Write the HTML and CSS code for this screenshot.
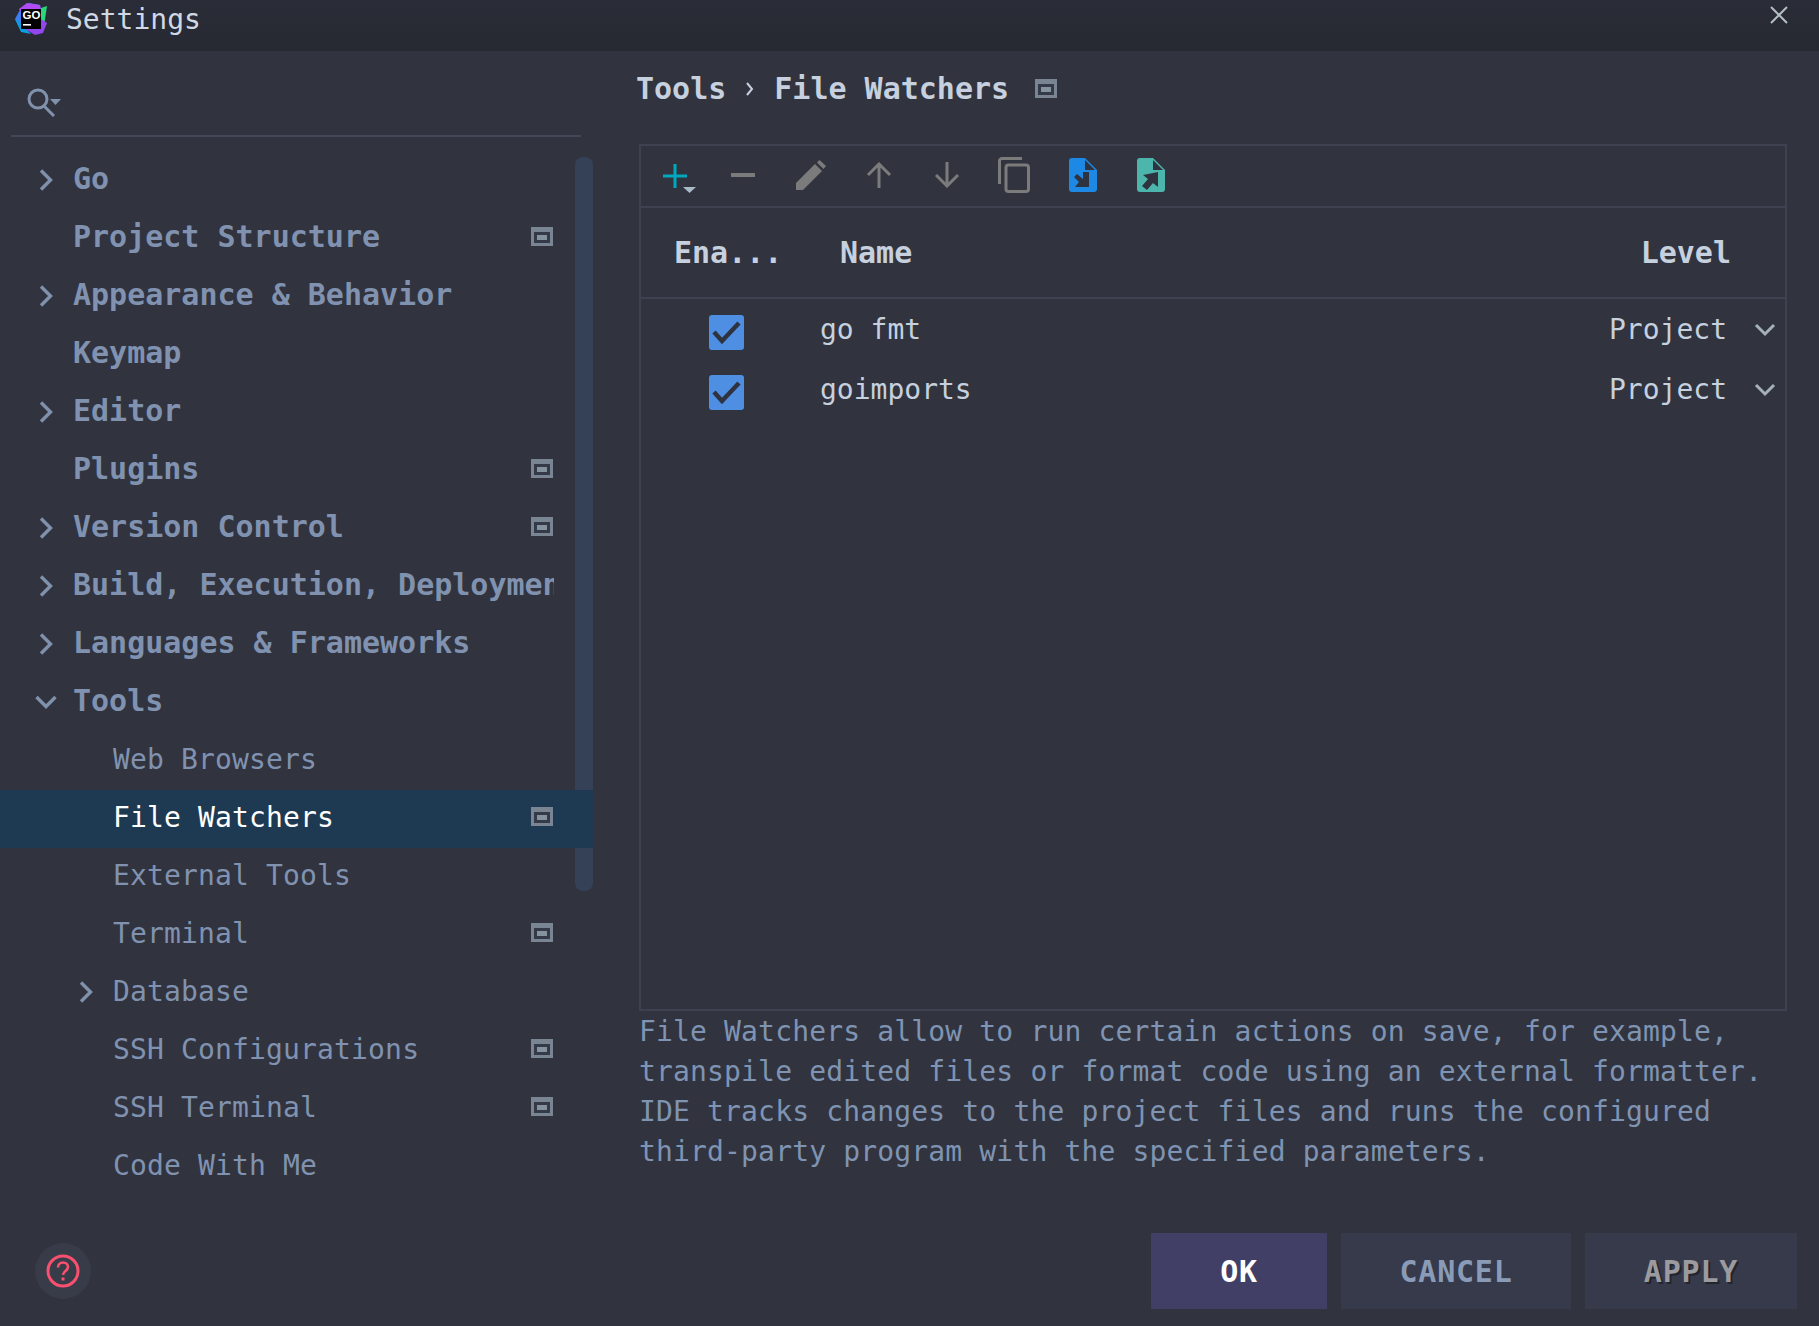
FILE: index.html
```html
<!DOCTYPE html>
<html lang="en">
<head>
    <meta charset="UTF-8">
    <title>Settings</title>
    <link rel="stylesheet" href="styles.css">
</head>
<body>
    <svg class="sprites" width="0" height="0">
        <symbol id="chev" viewBox="0 0 14 22"><path d="M2 1.500l9.500 9.500-9.500 9.500" fill="none" stroke="#8091ab" stroke-width="3.400"/></symbol>
        <symbol id="chev-open" viewBox="0 0 22 14"><path d="M1.500 2l9.500 9.500 9.500-9.500" fill="none" stroke="#8091ab" stroke-width="3.400"/></symbol>
        <symbol id="mod" viewBox="0 0 22 19">
            <rect width="22" height="19" fill="#7a8593"/>
            <rect x="3" y="5" width="16" height="11" fill="#343a48"/>
            <rect x="6" y="8" width="10" height="5" fill="#8593a1"/>
        </symbol>
        <symbol id="check" viewBox="0 0 35 35">
            <rect width="35" height="35" rx="3" fill="#4f8fe3"/>
            <path d="M5 17l8 9L30 8" fill="none" stroke="#2f3340" stroke-width="4.500"/>
        </symbol>
        <symbol id="drop" viewBox="0 0 22 14"><path d="M2 2l9 9 9-9" fill="none" stroke="#a6b0ba" stroke-width="3"/></symbol>
    </svg>

    <div class="window">
        <header class="titlebar">
            <svg class="logo" width="32" height="32" viewBox="0 0 32 32">
                <path d="M0 16L6 5 14 0 25 2 26 8 10 26 5 26z" fill="#3d7df0"/>
                <path d="M4 6L12 0 25 2 27 12 8 12z" fill="#b14cf5"/>
                <path d="M0 16l6 13 10 2-10-11z" fill="#0a9fe0"/>
                <path d="M26 5l6-2-3 20-7-4z" fill="#27d67d"/>
                <path d="M26 16l6 4-4 10-8 2-10-6z" fill="#9146ee"/>
                <rect x="6" y="6" width="20" height="20" fill="#000"/>
                <text x="7.500" y="16" class="logo-text">GO</text>
                <rect x="8" y="21" width="8" height="1.600" fill="#fff"/>
            </svg>
            <span class="title">Settings</span>
            <svg class="close" width="18" height="18" viewBox="0 0 18 18"><path d="M1 1l16 16M17 1L1 17" stroke="#b4bcc4" stroke-width="2"/></svg>
        </header>

        <div class="main">
            <aside class="sidebar">
                <div class="search">
                    <svg width="34" height="29" viewBox="0 0 34 29">
                        <circle cx="11" cy="11" r="9" fill="none" stroke="#8091ab" stroke-width="3"/>
                        <path d="M17 18l10 10" stroke="#8091ab" stroke-width="3"/>
                        <path d="M23 11h11l-5.500 6z" fill="#8091ab"/>
                    </svg>
                </div>
                <div class="scrollbar"></div>
                <ul class="tree">
                    <li class="row top"><svg class="arrow"><use href="#chev"/></svg><span class="label">Go</span></li>
                    <li class="row top"><span class="label">Project Structure</span><svg class="mod"><use href="#mod"/></svg></li>
                    <li class="row top"><svg class="arrow"><use href="#chev"/></svg><span class="label">Appearance &amp; Behavior</span></li>
                    <li class="row top"><span class="label">Keymap</span></li>
                    <li class="row top"><svg class="arrow"><use href="#chev"/></svg><span class="label">Editor</span></li>
                    <li class="row top"><span class="label">Plugins</span><svg class="mod"><use href="#mod"/></svg></li>
                    <li class="row top"><svg class="arrow"><use href="#chev"/></svg><span class="label">Version Control</span><svg class="mod"><use href="#mod"/></svg></li>
                    <li class="row top"><svg class="arrow"><use href="#chev"/></svg><span class="label">Build, Execution, Deployment</span></li>
                    <li class="row top"><svg class="arrow"><use href="#chev"/></svg><span class="label">Languages &amp; Frameworks</span></li>
                    <li class="row top"><svg class="arrow open"><use href="#chev-open"/></svg><span class="label">Tools</span></li>
                    <li class="row sub"><span class="label">Web Browsers</span></li>
                    <li class="row sub selected"><span class="label">File Watchers</span><svg class="mod"><use href="#mod"/></svg></li>
                    <li class="row sub"><span class="label">External Tools</span></li>
                    <li class="row sub"><span class="label">Terminal</span><svg class="mod"><use href="#mod"/></svg></li>
                    <li class="row sub"><svg class="arrow"><use href="#chev"/></svg><span class="label">Database</span></li>
                    <li class="row sub"><span class="label">SSH Configurations</span><svg class="mod"><use href="#mod"/></svg></li>
                    <li class="row sub"><span class="label">SSH Terminal</span><svg class="mod"><use href="#mod"/></svg></li>
                    <li class="row sub"><span class="label">Code With Me</span></li>
                </ul>
                <div class="help">
                    <svg width="34" height="34" viewBox="0 0 34 34">
                        <circle cx="17" cy="17" r="15" fill="none" stroke="#f9506f" stroke-width="3"/>
                        <path d="M12 13.500c0-3 2.200-5 5-5s5 2 5 4.600c0 3.900-5 3.900-5 8" fill="none" stroke="#f9506f" stroke-width="2.600"/>
                        <rect x="15.500" y="23.500" width="3" height="3" fill="#f9506f"/>
                    </svg>
                </div>
            </aside>

            <section class="content">
                <div class="crumbs">
                    <span>Tools</span>
                    <svg width="8" height="14" viewBox="0 0 8 14"><path d="M1 1l5 6-5 6" fill="none" stroke="#c6d0de" stroke-width="2"/></svg>
                    <span>File Watchers</span>
                    <svg class="mod crumb-mod"><use href="#mod"/></svg>
                </div>

                <div class="panel">
                    <div class="toolbar">
                        <svg class="tool" width="34" height="32" viewBox="0 0 34 32">
                            <path d="M12 2v24M0 14h24" stroke="#00a8bf" stroke-width="3"/>
                            <path d="M20 25h13l-6.500 6z" fill="#a9b9c6"/>
                        </svg>
                        <svg class="tool" width="24" height="4" viewBox="0 0 24 4"><path d="M0 2h24" stroke="#7b7b7b" stroke-width="4"/></svg>
                        <svg class="tool" width="30" height="30" viewBox="0 0 30 30">
                            <path d="M0 30v-7L19 4l7 7L7 30z" fill="#7b7b7b"/>
                            <path d="M21 2.500l2.500-2.500 6.500 6-2.500 3z" fill="#7b7b7b"/>
                        </svg>
                        <svg class="tool" width="26" height="26" viewBox="0 0 26 26"><path d="M13 26V3M2 13L13 2l11 11" fill="none" stroke="#7b7b7b" stroke-width="3"/></svg>
                        <svg class="tool" width="26" height="26" viewBox="0 0 26 26"><path d="M13 0v23M2 13l11 11 11-11" fill="none" stroke="#7b7b7b" stroke-width="3"/></svg>
                        <svg class="tool" width="32" height="36" viewBox="0 0 32 36">
                            <path d="M1.500 27V4a2.500 2.500 0 0 1 2.500-2.500h20" fill="none" stroke="#7b7b7b" stroke-width="3"/>
                            <rect x="8" y="8" width="22.500" height="26.500" rx="2.500" fill="none" stroke="#7b7b7b" stroke-width="3"/>
                        </svg>
                        <svg class="tool" width="28" height="34" viewBox="0 0 28 34">
                            <path d="M3 0H16L28 12V31a3 3 0 0 1-3 3H3a3 3 0 0 1-3-3V3a3 3 0 0 1 3-3z" fill="#1e88e5"/>
                            <path d="M16 2l10 10H16z" fill="#2f3340"/>
                            <path d="M20 14v15H6l4-5-5-5 3-3 6 5 0-7z" fill="#2f3340"/>
                        </svg>
                        <svg class="tool" width="28" height="34" viewBox="0 0 28 34">
                            <path d="M3 0H16L28 12V31a3 3 0 0 1-3 3H3a3 3 0 0 1-3-3V3a3 3 0 0 1 3-3z" fill="#4db6ac"/>
                            <path d="M16 2l10 10H16z" fill="#2f3340"/>
                            <path d="M21 14v15l-5-4-6 7-5-4 6-7-5-4z" fill="#2f3340"/>
                        </svg>
                    </div>
                    <div class="thead">
                        <span class="col-enabled">Ena...</span>
                        <span class="col-name">Name</span>
                        <span class="col-level">Level</span>
                    </div>
                    <div class="watcher">
                        <svg class="checkbox"><use href="#check"/></svg>
                        <span class="watcher-name">go fmt</span>
                        <span class="watcher-level">Project</span>
                        <svg class="drop"><use href="#drop"/></svg>
                    </div>
                    <div class="watcher">
                        <svg class="checkbox"><use href="#check"/></svg>
                        <span class="watcher-name">goimports</span>
                        <span class="watcher-level">Project</span>
                        <svg class="drop"><use href="#drop"/></svg>
                    </div>
                </div>

                <p class="desc">File Watchers allow to run certain actions on save, for example,<br>transpile edited files or format code using an external formatter.<br>IDE tracks changes to the project files and runs the configured<br>third-party program with the specified parameters.</p>

                <div class="buttons">
                    <button class="btn ok">OK</button>
                    <button class="btn cancel">CANCEL</button>
                    <button class="btn apply">APPLY</button>
                </div>
            </section>
        </div>
    </div>
</body>
</html>
```

FILE: styles.css
```css
* {
    box-sizing: border-box;
}

body {
    margin: 0;
    background-color: #31343f;
    font-family: "DejaVu Sans Mono", "Liberation Mono", monospace;
    overflow: hidden;
}

.sprites {
    position: absolute;
}

.window {
    width: 1819px;
    height: 1326px;
    display: flex;
    flex-direction: column;
}

.titlebar {
    height: 51px;
    flex: none;
    display: flex;
    align-items: flex-start;
    background: linear-gradient(to bottom, #2a2d37, #262932);
    color: #d0d8e4;
    position: relative;
}

.logo {
    margin: 3px 0 0 15px;
}

.logo-text {
    font-family: "Liberation Sans", sans-serif;
    font-weight: bold;
    font-size: 11.500px;
    fill: #fff;
}

.title {
    margin-left: 19px;
    font-size: 28px;
    line-height: 40px;
}

.close {
    position: absolute;
    right: 31px;
    top: 6px;
}

.main {
    flex: 1;
    display: flex;
    min-height: 0;
}

.sidebar {
    width: 593px;
    flex: none;
    position: relative;
}

.search {
    height: 86px;
    margin: 0 12px 0 11px;
    padding: 37px 0 0 16px;
    border-bottom: 2px solid #444757;
}

.scrollbar {
    position: absolute;
    left: 575px;
    top: 106px;
    width: 18px;
    height: 734px;
    background-color: #344156;
    border-radius: 8px;
}

.tree {
    list-style-type: none;
    margin: 0;
    padding: 15px 0 0;
    position: relative;
}

.row {
    height: 58px;
    padding-bottom: 4px;
    display: flex;
    align-items: center;
    color: #8092b0;
    position: relative;
}

.row.top {
    padding-left: 73px;
    padding-bottom: 6px;
    font-size: 30px;
    font-weight: bold;
}

.row.sub {
    padding-left: 113px;
    font-size: 28px;
    letter-spacing: 0.15px;
}

.row.selected {
    background-color: #1e3a52;
    color: #fff;
}

.label {
    max-width: 481px;
    overflow: hidden;
    white-space: nowrap;
}

.arrow {
    position: absolute;
    width: 14px;
    height: 22px;
    top: 17px;
    left: 39px;
}

.arrow.open {
    width: 22px;
    height: 14px;
    top: 21px;
    left: 35px;
}

.sub .arrow {
    left: 79px;
}

.mod {
    width: 22px;
    height: 19px;
    position: absolute;
    left: 531px;
    top: 17px;
}

.help {
    position: absolute;
    left: 35px;
    top: 1192px;
    width: 56px;
    height: 56px;
    border-radius: 50%;
    background-color: #383b48;
    display: flex;
    align-items: center;
    justify-content: center;
}

.content {
    flex: 1;
    min-width: 0;
    padding: 0 22px 0 46px;
    display: flex;
    flex-direction: column;
}

.crumbs {
    height: 93px;
    flex: none;
    margin-left: -3px;
    padding-bottom: 18px;
    display: flex;
    align-items: center;
    gap: 20px;
    font-size: 30px;
    font-weight: bold;
    color: #c6d0de;
}

.crumb-mod {
    position: static;
    margin-left: 6px;
}

.panel {
    height: 867px;
    flex: none;
    margin-right: 10px;
    border: 2px solid #3e4250;
    color: #c6d0de;
}

.toolbar {
    height: 62px;
    padding-left: 22px;
    display: flex;
    align-items: center;
    border-bottom: 2px solid #3e4250;
    position: relative;
}

.tool {
    position: absolute;
}

.tool:nth-child(1) { left: 22px; top: 16px; }
.tool:nth-child(2) { left: 90px; top: 27px; }
.tool:nth-child(3) { left: 155px; top: 14px; }
.tool:nth-child(4) { left: 225px; top: 16px; }
.tool:nth-child(5) { left: 293px; top: 16px; }
.tool:nth-child(6) { left: 357px; top: 11px; }
.tool:nth-child(7) { left: 428px; top: 12px; }
.tool:nth-child(8) { left: 496px; top: 12px; }

.thead {
    height: 91px;
    display: flex;
    align-items: center;
    font-size: 30px;
    font-weight: bold;
    border-bottom: 2px solid #3e4250;
}

.col-enabled {
    margin-left: 33px;
    width: 166px;
}

.col-level {
    margin-left: auto;
    margin-right: 54px;
}

.watcher {
    height: 60px;
    display: flex;
    align-items: center;
    font-size: 28px;
}

.thead + .watcher {
    margin-top: 1px;
}

.checkbox {
    width: 35px;
    height: 35px;
    margin-left: 68px;
    margin-top: 4px;
    flex: none;
}

.watcher-name {
    margin-left: 76px;
    margin-bottom: 2px;
}

.watcher-level {
    margin-left: auto;
    margin-bottom: 2px;
}

.drop {
    width: 22px;
    height: 14px;
    margin: 0 9px 0 27px;
}

.desc {
    margin: 1px 0 0;
    font-size: 28px;
    line-height: 40px;
    letter-spacing: 0.16px;
    color: #7f93b2;
    white-space: nowrap;
}

.buttons {
    margin-top: 61px;
    display: flex;
    justify-content: flex-end;
    gap: 14px;
}

.btn {
    height: 76px;
    border: none;
    font-family: inherit;
    font-size: 30px;
    font-weight: bold;
    letter-spacing: 0.8px;
    background-color: #373a4a;
    padding: 0;
}

.ok {
    width: 176px;
    background-color: #423f66;
    color: #fff;
}

.cancel {
    width: 230px;
    color: #8a9bb8;
}

.apply {
    width: 212px;
    color: #9b9b9f;
    text-shadow: 2px 2px 0 #23252e;
}
```
